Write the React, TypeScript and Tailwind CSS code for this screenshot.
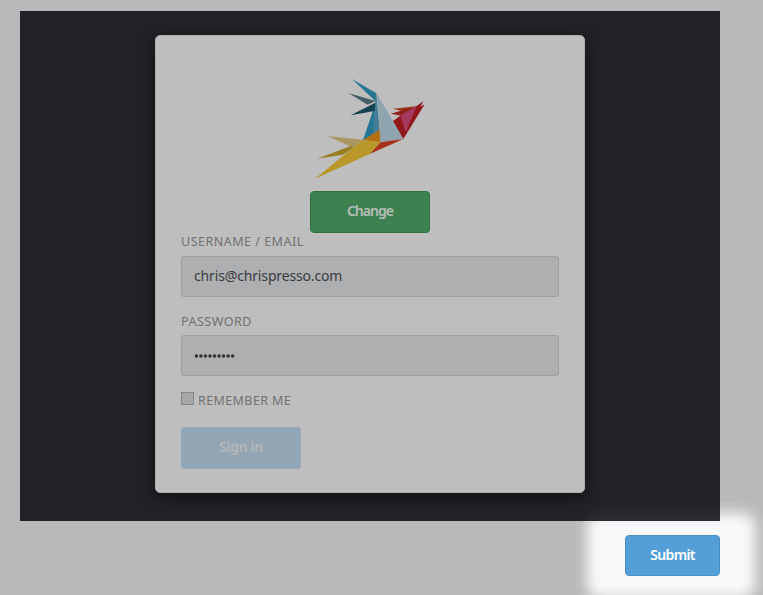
import type { ReactNode } from "react";

function Bird() {
  return (
    <svg className="block h-[115px] w-[130px]" viewBox="0 0 390 345" aria-hidden="true">
      <polygon points="141,27 214,70 213,95" fill="#31a0c4" />
      <polygon points="213,95 216,190 174,210" fill="#31a0c4" />
      <polygon points="214,70 224,184 202,194 211,95" fill="#5ba8c8" />
      <polygon points="130,69 212,93 188,104" fill="#5f828c" />
      <polygon points="137,136 211,98 209,123" fill="#1b596f" />
      <polygon points="215,70 295,207 226,217 221,140" fill="#bfdceb" />
      <polygon points="263,116 334,109 292,124" fill="#d44822" />
      <polygon points="257,131 334,109 288,137" fill="#c52a27" />
      <polygon points="355,94 334,109 286,137 264,153 295,207 359,103 346,110" fill="#c41f27" />
      <polygon points="286,137 334,109 303,187" fill="#dc4f82" />
      <polygon points="226,217 295,207 194,252" fill="#e04221" />
      <polygon points="174,210 224,179 226,217" fill="#f0981c" />
      <polygon points="67,198 174,209 144,233" fill="#e5ca85" />
      <polygon points="37,266 139,227 146,233 113,254" fill="#cbaa2c" />
      <polygon points="30,326 144,233 174,210 226,217 194,252" fill="#f8cb36" />
    </svg>
  );
}

function Field({ label, children }: { label: string; children: ReactNode }) {
  return (
    <label className="block">
      <span className="block whitespace-nowrap text-[12.5px] leading-[17px] tracking-[0.5px] text-[#999]">{label}</span>
      {children}
    </label>
  );
}

export default function App() {
  return (
    <main className="relative h-[595px] w-[763px] overflow-hidden bg-[#f7f9fb] pt-[11px] pl-5 font-['Noto_Sans','Open_Sans',sans-serif]">
      <div className="w-[700px]">
        <section className="flex h-[510px] justify-center bg-[#2d2f34] pt-6">
          <form
            className="flex h-[458px] w-[430px] flex-col rounded-[5px] border border-[#e8edef] bg-white px-[25px] shadow-[0_4px_16px_rgba(0,0,0,0.55)]"
            onSubmit={(e) => e.preventDefault()}
          >
            <div className="flex h-[155px] pt-[34px] pl-[124px]">
              <Bird />
            </div>
            <button type="button" className="flex h-[42px] w-[120px] shrink-0 items-center justify-center self-center rounded-[4px] border border-[#44975a] bg-[#51ad6a] pb-[3px] text-[14px] font-semibold tracking-[-0.95px] text-[#f5fff7]">
              Change
            </button>
            <div className="h-20 shrink-0">
              <Field label="USERNAME / EMAIL">
                <span className="mt-1.5 flex h-[41px] items-center rounded-[3px] border border-[#d3d5d8] bg-[#e9ebee] px-3 pb-0.5 text-[14px] tracking-[-0.15px] text-[#505156]">
                  chris@chrispresso.com
                </span>
              </Field>
            </div>
            <div className="h-[76px] shrink-0">
              <Field label="PASSWORD">
                <span className="mt-[5px] flex h-[41px] items-center rounded-[3px] border border-[#d3d5d8] bg-[#e9ebee] px-3">
                  <svg className="h-2 w-[42px]" viewBox="0 0 42 8" role="img" aria-label="Password">
                    {Array.from({ length: 9 }, (_, i) => (
                      <circle key={i} cx={2.4 + i * 4.53} cy="4" r="1.75" fill="#444" />
                    ))}
                  </svg>
                </span>
              </Field>
            </div>
            <label className="flex h-[38px] shrink-0 pt-[3px] text-[12.5px] leading-[17px] tracking-[0.4px] text-[#999]">
              <span className="mr-1 h-[13px] w-[13px] border border-[#b7b7b7] bg-[#e0e0e0]" />
              REMEMBER ME
            </label>
            <button type="button" className="flex h-[42px] w-[120px] shrink-0 items-center justify-center rounded-[4px] bg-[#c7dff3] pb-[3px] text-[14px] font-semibold tracking-[-0.35px] text-[#f4f6f7]">
              Sign in
            </button>
          </form>
        </section>
        <div className="flex justify-end pt-[14px]">
          <button className="flex h-[41px] w-[95px] items-center justify-center rounded-[4px] border border-[#4b8fc1] bg-[#549fd7] pb-0.5 text-[14px] font-semibold tracking-[-0.7px] text-white">
            Submit
          </button>
        </div>
      </div>
      <div className="pointer-events-none absolute top-[502px] left-[576px] h-[107px] w-[190px] rounded-[24px] shadow-[0_0_0_1000px_rgba(0,0,0,0.255),inset_0_0_13px_11px_rgba(0,0,0,0.255)]" />
    </main>
  );
}
